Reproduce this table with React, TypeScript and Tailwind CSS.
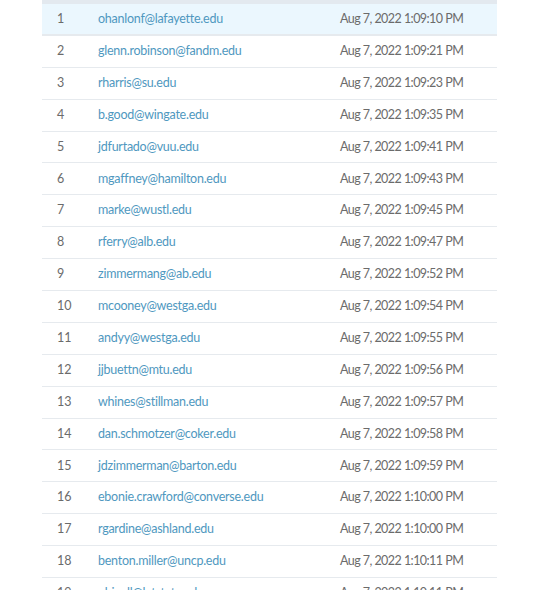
import type React from "react";

type Signup = { email: string; time: string };

const signups: Signup[] = [
  { email: "ohanlonf@lafayette.edu", time: "1:09:10 PM" },
  { email: "glenn.robinson@fandm.edu", time: "1:09:21 PM" },
  { email: "rharris@su.edu", time: "1:09:23 PM" },
  { email: "b.good@wingate.edu", time: "1:09:35 PM" },
  { email: "jdfurtado@vuu.edu", time: "1:09:41 PM" },
  { email: "mgaffney@hamilton.edu", time: "1:09:43 PM" },
  { email: "marke@wustl.edu", time: "1:09:45 PM" },
  { email: "rferry@alb.edu", time: "1:09:47 PM" },
  { email: "zimmermang@ab.edu", time: "1:09:52 PM" },
  { email: "mcooney@westga.edu", time: "1:09:54 PM" },
  { email: "andyy@westga.edu", time: "1:09:55 PM" },
  { email: "jjbuettn@mtu.edu", time: "1:09:56 PM" },
  { email: "whines@stillman.edu", time: "1:09:57 PM" },
  { email: "dan.schmotzer@coker.edu", time: "1:09:58 PM" },
  { email: "jdzimmerman@barton.edu", time: "1:09:59 PM" },
  { email: "ebonie.crawford@converse.edu", time: "1:10:00 PM" },
  { email: "rgardine@ashland.edu", time: "1:10:00 PM" },
  { email: "benton.miller@uncp.edu", time: "1:10:11 PM" },
  { email: "ohinall@latstate.edu", time: "1:10:11 PM" },
];

const Row = ({ index, signup }: { index: number; signup: Signup }) => (
  <div
    className={`grid h-[31.9px] grid-cols-[56px_242px_1fr] items-center border-b border-[#e6eaee] ${
      index === 0 ? "bg-[#ebf7fe] border-b-2" : "bg-white"
    }`}
  >
    <span className="pl-[15px] text-[#6b6b6b]">{index + 1}</span>
    <a className="tracking-[-0.25px] text-[#4f98c0]" href="#">
      {signup.email}
    </a>
    <span className="tracking-[-0.55px] text-[#6b6b6b]">
      Aug 7, 2022 {signup.time}
    </span>
  </div>
);

export default function App(): React.ReactElement {
  return (
    <div className="h-[590px] w-[533px] overflow-hidden bg-white font-['Lato',sans-serif] text-[12.5px]">
      <div className="ml-[42px] w-[455px]">
        <div className="h-[4px] bg-[#e3e9ef]" />
        {signups.map((signup, i) => (
          <Row index={i} key={signup.email} signup={signup} />
        ))}
      </div>
    </div>
  );
}
